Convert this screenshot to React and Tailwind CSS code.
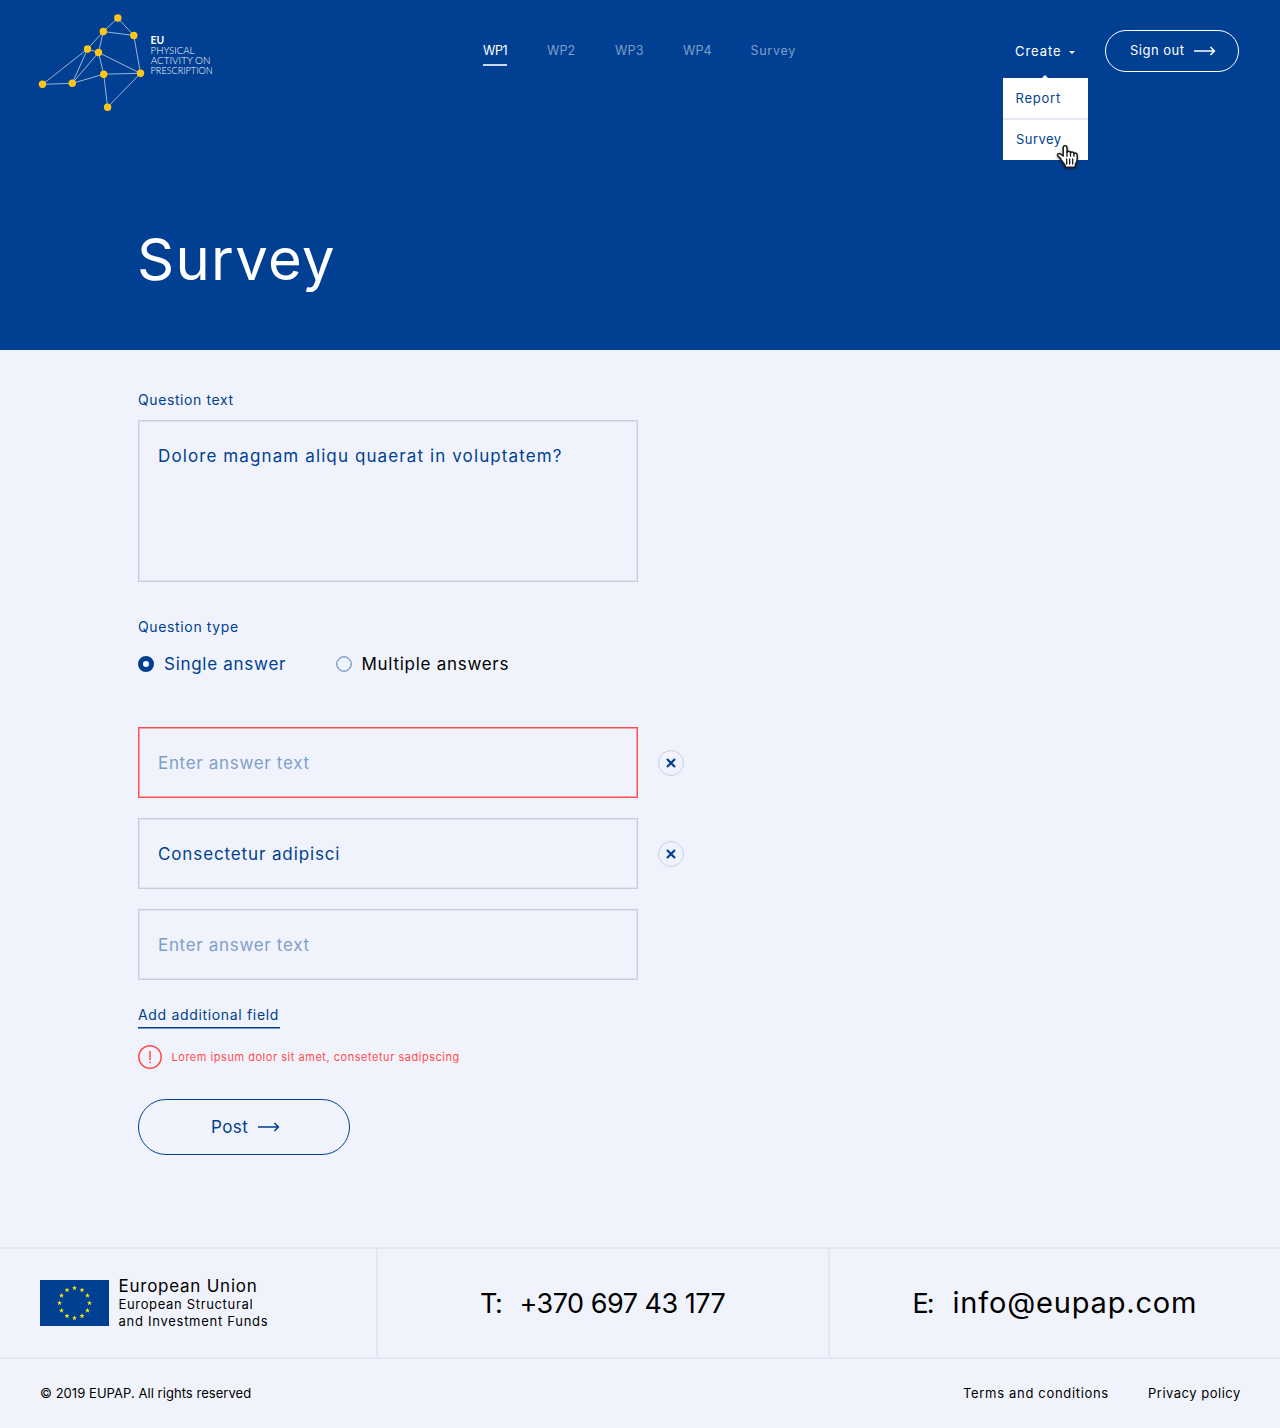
const nodes = [
  [117.8, 18], [103.3, 31.5], [133.8, 35.5], [87.5, 49], [98.5, 52.5],
  [140.5, 73.3], [103.7, 74.2], [72.3, 83.3], [42.5, 84.3], [107.6, 107.2],
];
const edges = [
  [0, 1], [0, 2], [1, 2], [1, 3], [1, 4], [3, 4], [2, 5], [4, 5], [4, 6],
  [5, 6], [3, 8], [3, 7], [4, 7], [6, 7], [7, 8], [6, 9], [5, 9],
];

function Logo() {
  return (
    <svg className="block h-[102px] w-[180px] shrink-0" viewBox="36 12 180 102" fill="none">
      <g stroke="#c3d0e6" strokeWidth="0.8">
        {edges.map(([a, b]) => (
          <line key={`${a}-${b}`} x1={nodes[a][0]} y1={nodes[a][1]} x2={nodes[b][0]} y2={nodes[b][1]} />
        ))}
      </g>
      <g fill="#ffc61a">
        {nodes.map(([x, y]) => <circle key={x} cx={x} cy={y} r="3.7" />)}
      </g>
      <g className="font-['Lato',sans-serif] text-[9.6px] font-light" fill="#ffffff">
        <text x="150.6" y="44" className="text-[11px] font-bold" textLength="13.6" lengthAdjust="spacingAndGlyphs">EU</text>
        <text x="150.6" y="53.7" textLength="43.8" lengthAdjust="spacingAndGlyphs">PHYSICAL</text>
        <text x="150.8" y="63.6" textLength="59.6" lengthAdjust="spacingAndGlyphs">ACTIVITY ON</text>
        <text x="150.6" y="73.6" textLength="62" lengthAdjust="spacingAndGlyphs">PRESCRIPTION</text>
      </g>
    </svg>
  );
}

function Arrow() {
  return (
    <svg className="block h-[10px] w-[22px] shrink-0" viewBox="0 0 22 10" fill="none" stroke="currentColor" strokeWidth="1.5">
      <path d="M0 5h20.3M16.4 1l4 4-4 4" />
    </svg>
  );
}

function HandCursor() {
  return (
    <svg
      className="absolute top-[66px] left-[53px] h-[28px] w-[26px] drop-shadow-[0_1px_1px_rgba(0,0,0,0.5)]"
      viewBox="0 0 26 28"
    >
      <path
        d="M7.2 4C7.2 2.5 8 1.8 9.1 1.8S11 2.5 11 4v4.4c.3-.8 1-1.2 1.8-1.1.9 0 1.6.6 1.7 1.6.4-.7 1-1 1.8-.9.9.1 1.5.8 1.6 1.7.4-.5.9-.7 1.5-.6 1.1.1 1.8.9 1.8 2.2v3.4c0 2.3-.6 3.3-1.4 4.7-.5.9-.6 1.9-.6 3.9H9.4c0-1.5-.4-2.6-1.3-3.6-1-1.2-1.9-2.3-2.8-3.9-.9-1.7-1.8-2.3-3.2-3.6-.8-.9-.7-1.9.1-2.4 1-.6 2.1-.1 3.2.8L7.2 12z"
        fill="#fff"
        stroke="#1d1d1d"
        strokeWidth="1.5"
        strokeLinejoin="round"
      />
      <path d="M11 8v4.3M14.5 9v3.3M17.9 10v2.3M10.7 15v5M13.7 15v5M16.7 15v5" stroke="#1d1d1d" strokeWidth="1.3" strokeLinecap="round" />
    </svg>
  );
}

function Header() {
  return (
    <header className="h-[350px] bg-[#003f91] text-white">
      <div className="flex h-[190px] items-start pt-3 pl-9">
        <Logo />
        <nav className="ml-[267px] flex gap-10 pt-[29px] text-[12.5px] leading-5 text-[#7f9fc8]">
          <a className="h-[25px] w-6 border-b-2 border-[#ccd8ec] tracking-[-0.4px] whitespace-nowrap text-white">WP1</a>
          <a className="w-7 tracking-[0.1px]">WP2</a>
          <a className="w-7 tracking-[0.2px]">WP3</a>
          <a className="w-7 tracking-[0.1px]">WP4</a>
          <a className="-ml-[0.5px] tracking-[0.7px]">Survey</a>
        </nav>
        <div className="relative ml-auto w-[85px] pt-[29px] pl-3 text-[13px] leading-5">
          <div className="flex items-center gap-[7.5px]">
            <span className="tracking-[0.95px]">Create</span>
            <svg className="mt-[3px] h-[3px] w-[6px]" viewBox="0 0 6 3"><path d="M0 0h6L3 3z" fill="#fff" /></svg>
          </div>
          <div className="absolute top-[66px] left-0 w-[85px] bg-white text-[#003f91]">
            <svg className="absolute top-[-3px] left-[39px] h-[3px] w-[6px]" viewBox="0 0 6 3"><path d="M0 3h6L3 0z" fill="#fff" /></svg>
            <div className="h-[42px] border-b-2 border-[#e3e8f3] pt-[10px] pl-[12.6px] tracking-[0.75px]">Report</div>
            <div className="h-[40px] pt-[9px] pl-[13px] tracking-[0.45px]">Survey</div>
            <HandCursor />
          </div>
        </div>
        <button className="mt-[18px] mr-[41px] ml-[17px] flex h-[42px] w-[134px] items-center gap-[9px] rounded-full border border-white pl-6 text-left text-[13px] leading-5">
          <span className="-mt-0.5 w-[55px] tracking-[0.5px] whitespace-nowrap">Sign out</span>
          <Arrow />
        </button>
      </div>
      <h1 className="mt-[35px] ml-[137px] text-[58px] leading-[68px] tracking-[1.3px]">Survey</h1>
    </header>
  );
}

function RemoveButton() {
  return (
    <button className="flex size-[26px] items-center justify-center rounded-full border border-[#c8d0e3] text-[#003f91]">
      <svg className="size-[10px]" viewBox="0 0 10 10" stroke="currentColor" strokeWidth="2.2"><path d="M1 1l8 8M9 1L1 9" /></svg>
    </button>
  );
}

function Survey() {
  return (
    <main className="h-[897px] pt-10 pl-[138px] text-[#003f91]">
      <div className="text-[14px] leading-5 tracking-[0.6px]">Question text</div>
      <div className="mt-[10px] h-[162px] w-[500px] border border-[#c4cce0] px-[19px] pt-[23px] text-[17px] leading-6 tracking-[1.11px] whitespace-nowrap shadow-[inset_0_0_0_1px_#dfe4f0]">
        Dolore magnam aliqu quaerat in voluptatem?
      </div>
      <div className="mt-[35px] text-[14px] leading-5 tracking-[0.64px]">Question type</div>
      <div className="mt-[15px] flex items-center text-[17px] leading-6">
        <span className="size-4 rounded-full border-[5px] border-[#003f91] bg-white" />
        <span className="ml-[10px] w-[172px] tracking-[0.72px]">Single answer</span>
        <span className="size-4 rounded-full border-[1.5px] border-[#7f9fcb] shadow-[inset_0_0_0_0.5px_#7f9fcb]" />
        <span className="ml-[9.5px] tracking-[0.72px] text-black">Multiple answers</span>
      </div>
      <div className="mt-[51px] flex flex-col gap-5 text-[17px] leading-6">
        <div className="flex items-center gap-5">
          <div className="flex h-[71px] w-[500px] items-center border border-[#ff4d4d] px-[19px] tracking-[0.68px] text-[#7f9fcb] shadow-[inset_0_0_0_1px_#f8a3a8]">Enter answer text</div>
          <RemoveButton />
        </div>
        <div className="flex items-center gap-5">
          <div className="flex h-[71px] w-[500px] items-center border border-[#c4cce0] px-[19px] tracking-[0.88px] shadow-[inset_0_0_0_1px_#dfe4f0]">Consectetur adipisci</div>
          <RemoveButton />
        </div>
        <div className="flex h-[71px] w-[500px] items-center border border-[#c4cce0] px-[19px] tracking-[0.68px] text-[#7f9fcb] shadow-[inset_0_0_0_1px_#dfe4f0]">Enter answer text</div>
      </div>
      <a className="mt-[25px] block h-[23px] w-[141.5px] border-b border-[#003f91] text-[14px] leading-5 tracking-[0.67px] whitespace-nowrap shadow-[0_0.5px_0_#003f91]">Add additional field</a>
      <div className="mt-[17px] flex items-center gap-[9.5px] text-[#ff4d4d]">
        <svg className="size-6" viewBox="0 0 24 24" fill="none" stroke="currentColor" strokeWidth="1.5">
          <circle cx="12" cy="12" r="11.2" />
          <path d="M12 6v9M12 16.6v1.6" />
        </svg>
        <span className="text-[11px] leading-4 tracking-[0.53px]">Lorem ipsum dolor sit amet, consetetur sadipscing</span>
      </div>
      <button className="mt-[30px] flex h-14 w-[212px] items-center rounded-full border border-[#003f91] pl-[72px] text-left text-[17px] leading-6">
        <span className="w-[47px] tracking-[0.4px]">Post</span>
        <Arrow />
      </button>
    </main>
  );
}

const starPath = (cx, cy, r) =>
  Array.from({ length: 10 }, (_, i) => {
    const a = (Math.PI * i) / 5 - Math.PI / 2;
    const q = i % 2 ? r * 0.4 : r;
    return `${i ? "L" : "M"}${(cx + q * Math.cos(a)).toFixed(2)} ${(cy + q * Math.sin(a)).toFixed(2)}`;
  }).join("") + "z";

function Flag() {
  return (
    <svg className="h-[46px] w-[69px] shrink-0 bg-[#003f91]" viewBox="0 0 69 46" fill="#ffed00">
      {Array.from({ length: 12 }, (_, i) => (
        <path key={i} d={starPath(34.5 + 15 * Math.sin((i * Math.PI) / 6), 23 - 15 * Math.cos((i * Math.PI) / 6), 2.7)} />
      ))}
    </svg>
  );
}

function Footer() {
  return (
    <footer className="text-black">
      <div className="flex h-[112px] border-y-2 border-[#e2e7f2]">
        <div className="flex w-[378px] items-center gap-[10px] border-r-2 border-[#e2e7f2] pl-10">
          <Flag />
          <div className="-mt-px text-[13px] leading-[17px]">
            <div className="-ml-[0.5px] text-[17px] leading-[20px] tracking-[0.75px]">European Union</div>
            <div className="-ml-[0.5px] tracking-[0.66px]">European Structural</div>
            <div className="-ml-[0.5px] tracking-[0.73px]">and Investment Funds</div>
          </div>
        </div>
        <div className="flex w-[452px] items-center border-r-2 border-[#e2e7f2] pt-0.5 pl-[102px] text-[27px] leading-8 whitespace-nowrap">
          <span className="w-[39.5px] tracking-[-1.5px]">T:</span>
          <span className="tracking-[-0.5px]">+370 697 43 177</span>
        </div>
        <div className="flex items-baseline pt-[38px] pl-[82.5px] text-[29px] leading-8 whitespace-nowrap">
          <span className="w-10 text-[27px] tracking-[-2px]">E:</span>
          <span className="tracking-[0.82px]">info@eupap.com</span>
        </div>
      </div>
      <div className="flex h-[68px] items-center pl-10 text-[13px] leading-5">
        <span className="tracking-[0.05px]">© 2019 EUPAP. All rights reserved</span>
        <a className="ml-auto w-[185px] tracking-[0.68px]">Terms and conditions</a>
        <a className="w-[132px] tracking-[0.5px]">Privacy policy</a>
      </div>
    </footer>
  );
}

export default function App() {
  return (
    <div className="h-[1428px] w-[1280px] overflow-hidden bg-[#f0f3fb] font-['Inter',sans-serif]">
      <Header />
      <Survey />
      <Footer />
    </div>
  );
}
